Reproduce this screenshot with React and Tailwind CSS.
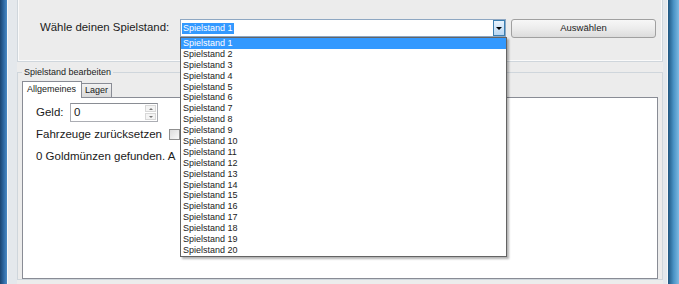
const saves = Array.from({ length: 20 }, (_, i) => `Spielstand ${i + 1}`);

export default function App() {
  return (
    <div className="w-[679px] h-[284px] overflow-hidden flex bg-[#ececec] text-[#1a1a1a] font-['Liberation_Sans',Arial,sans-serif]">
      {/* linker Fensterrahmen */}
      <div className="w-[7px] shrink-0 bg-gradient-to-r from-[#1a4470] via-[#2c66a0] to-[#4a8ac4]" />
      <div className="w-[10px] shrink-0 bg-[#e4e8ec] border-l border-[#f5f7f9]" />

      {/* Client-Bereich */}
      <div className="w-[646px] shrink-0 flex flex-col">
        {/* oberer Rahmen */}
        <div className="h-[62px] shrink-0 border-x border-b border-[#cfd6dc] shadow-[inset_1px_0_0_#fafafa,inset_-1px_0_0_#fafafa,inset_0_-1px_0_#fafafa] pt-[19px] pl-[22px] flex items-start">
          <div className="w-[140px] h-[18px] flex items-center text-[11.4px]">Wähle deinen Spielstand:</div>
          <div className="relative w-[326px] h-[18px] bg-white border border-[#8ea7c2] flex items-center">
            <span className="ml-[1px] px-[1px] h-[11px] flex items-center bg-[#3399ff] text-white text-[9px] leading-[11px]">Spielstand 1</span>
            <div className="ml-auto w-[12px] h-[16px] border border-[#3c7fb1] bg-gradient-to-b from-[#e8f3fd] to-[#b9d7f3] flex items-center justify-center">
              <div className="w-0 h-0 border-l-[3px] border-r-[3px] border-t-[3px] border-l-transparent border-r-transparent border-t-black" />
            </div>
            {/* aufgeklappte Liste */}
            <div className="absolute left-[-1px] top-[17px] w-[327px] z-20 bg-white border border-[#646464] shadow-[2px_2px_2px_rgba(0,0,0,0.3)]">
              {saves.map((s, i) => (
                <div key={s} className={`h-[10.9px] leading-[10.9px] pl-[2px] text-[9px] ${i === 0 ? 'bg-[#3399ff] text-white' : 'text-[#222]'}`}>{s}</div>
              ))}
            </div>
          </div>
          <button className="ml-[5px] w-[145px] h-[19px] rounded-[3px] border border-[#a0a0a0] bg-gradient-to-b from-[#f7f7f7] via-[#ececec] to-[#dcdcdc] text-[9.5px] text-[#222] flex items-center justify-center">
            Auswählen
          </button>
        </div>

        {/* Spielstand bearbeiten */}
        <fieldset className="mt-[5px] border border-[#cfd6dc] px-[4px] pt-[3px] min-w-0">
          <legend className="px-[2px] text-[9px] leading-[11px] text-[#222]">Spielstand bearbeiten</legend>
          <div className="flex items-end h-[16px]">
            <div className="relative z-10 -mb-px h-[17px] w-[60px] bg-white border border-b-0 border-[#898c95] pl-[4px] text-[9px] leading-[15px]">Allgemeines</div>
            <div className="h-[14px] w-[30px] border border-b-0 border-l-0 border-[#898c95] bg-gradient-to-b from-[#f2f2f2] to-[#dadada] pl-[3px] text-[9px] leading-[13px]">Lager</div>
          </div>
          <div className="h-[182px] bg-white border border-[#898c95] pt-[5px] pl-[13px] flex flex-col text-[11.5px]">
            <div className="h-[19px] flex items-center">
              <span className="w-[34px]">Geld:</span>
              <div className="w-[88px] h-[19px] border border-[#abadb3] border-t-[#8a8d94] flex items-center">
                <span className="ml-[3px]">0</span>
                <div className="ml-auto mr-[1px] w-[11px] h-[15px] flex flex-col gap-px">
                  <div className="flex-1 bg-[#f4f4f4] border border-[#d8d8d8] flex items-center justify-center">
                    <div className="w-0 h-0 border-l-[2px] border-r-[2px] border-b-[2px] border-l-transparent border-r-transparent border-b-[#777]" />
                  </div>
                  <div className="flex-1 bg-[#f4f4f4] border border-[#d8d8d8] flex items-center justify-center">
                    <div className="w-0 h-0 border-l-[2px] border-r-[2px] border-t-[2px] border-l-transparent border-r-transparent border-t-[#777]" />
                  </div>
                </div>
              </div>
            </div>
            <div className="mt-[3px] h-[19px] flex items-center">
              <span>Fahrzeuge zurücksetzen</span>
              <div className="ml-[7px] w-[11px] h-[11px] border border-[#8f8f8f] bg-gradient-to-br from-[#dcdcdc] to-[#fafafa]" />
            </div>
            <div className="mt-[3px] h-[19px] flex items-center">0 Goldmünzen gefunden. A</div>
          </div>
        </fieldset>
      </div>

      {/* rechter Fensterrahmen */}
      <div className="w-[5px] shrink-0 bg-[#e4e8ec] border-r border-[#f5f7f9]" />
      <div className="w-[11px] shrink-0 bg-gradient-to-r from-[#1f5680] via-[#4a92c4] to-[#7db9e2]" />
    </div>
  );
}
